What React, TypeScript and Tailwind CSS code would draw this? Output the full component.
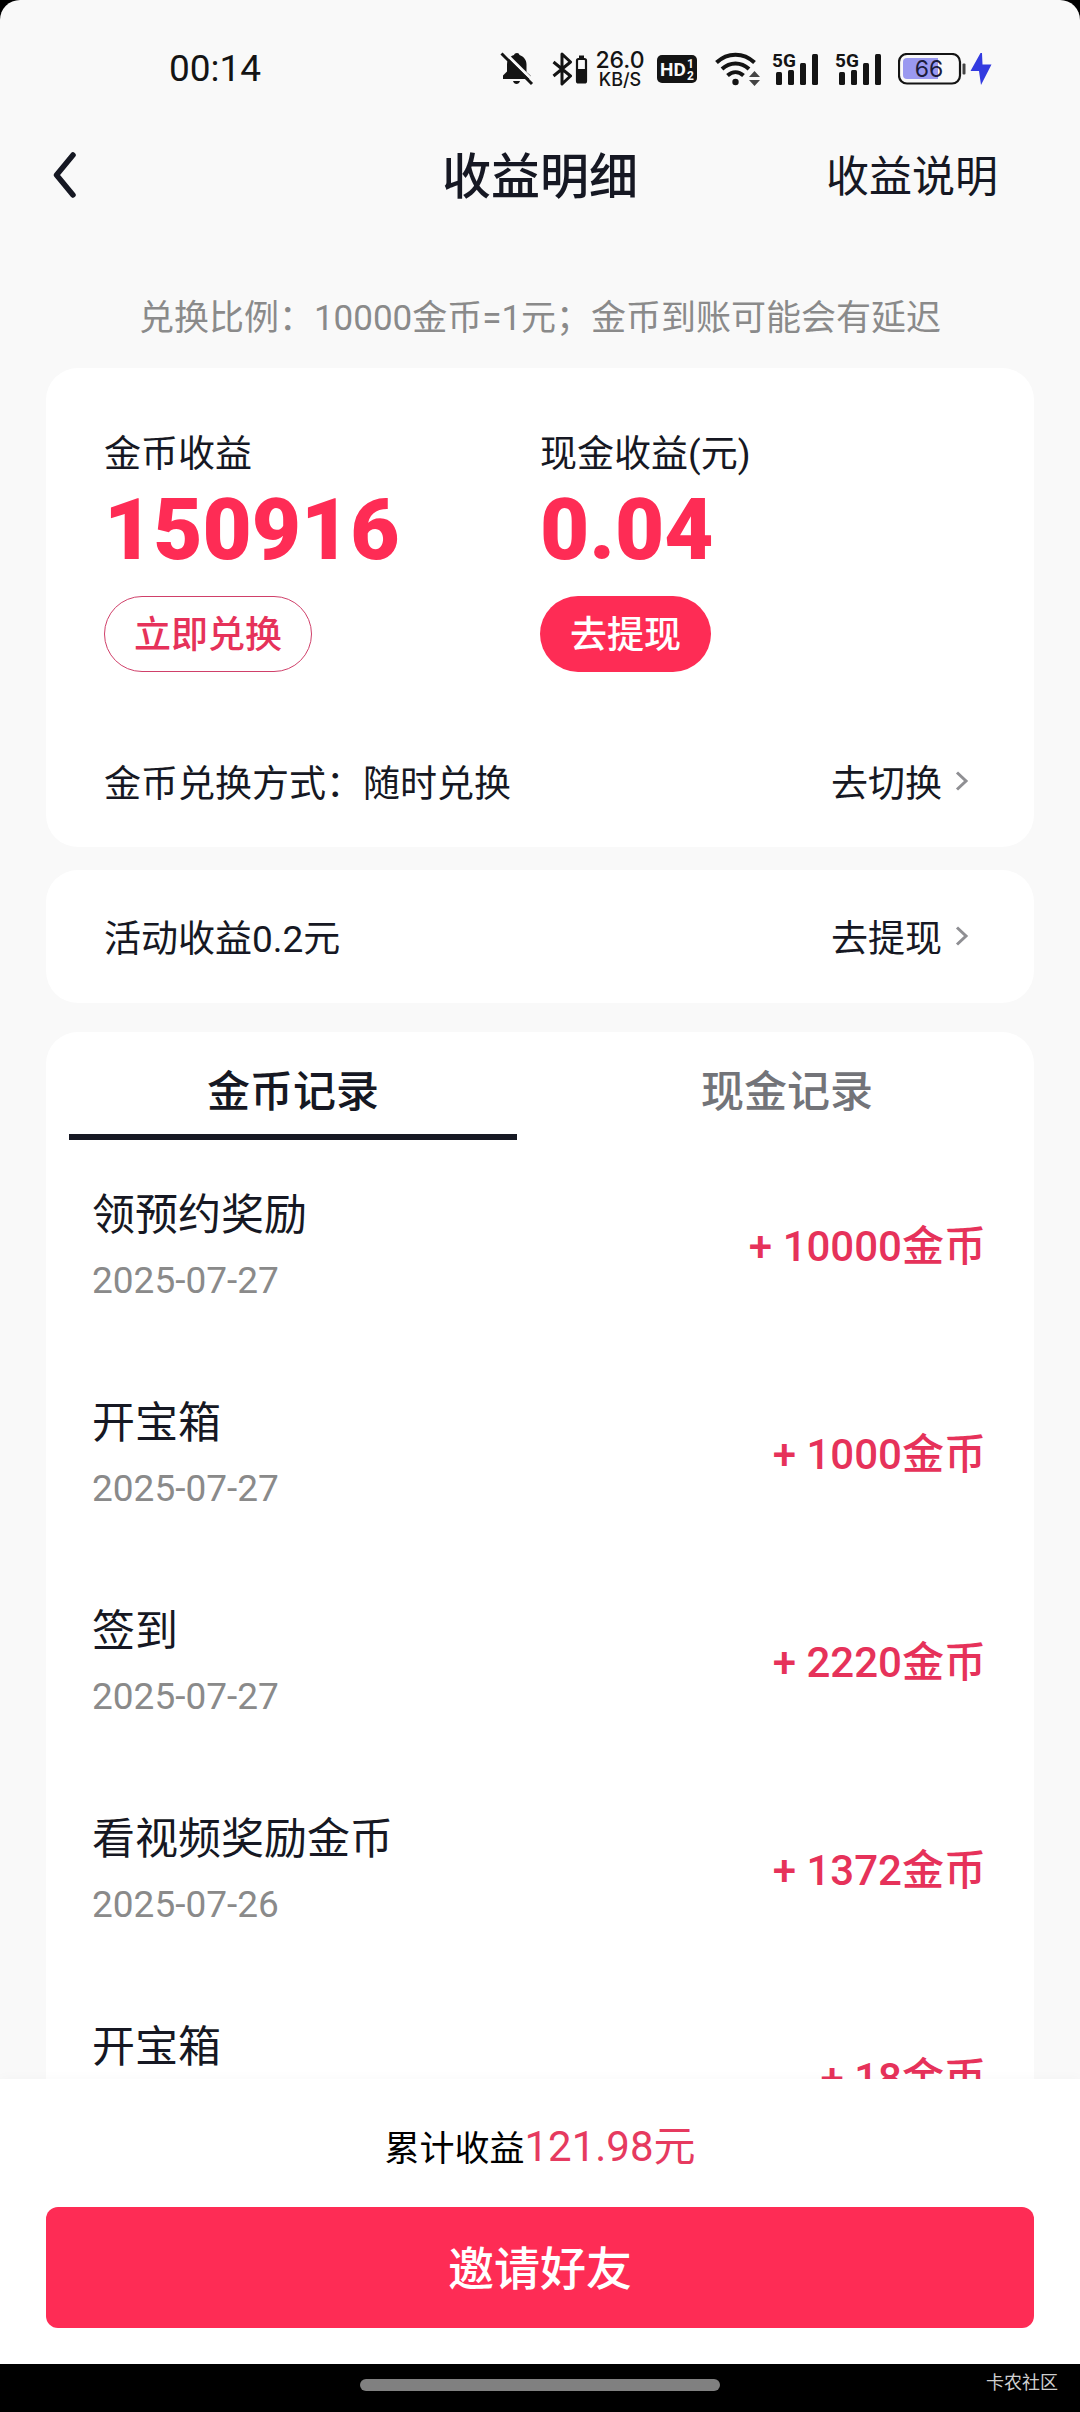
import * as React from "react";
import { clsx } from "clsx";

type TabKey = "coin" | "cash";

interface EarningRecord {
  id: number;
  title: string;
  date: string;
  amount: string;
}

const COIN_RECORDS: EarningRecord[] = [
  { id: 1, title: "领预约奖励", date: "2025-07-27", amount: "10000" },
  { id: 2, title: "开宝箱", date: "2025-07-27", amount: "1000" },
  { id: 3, title: "签到", date: "2025-07-27", amount: "2220" },
  { id: 4, title: "看视频奖励金币", date: "2025-07-26", amount: "1372" },
  { id: 5, title: "开宝箱", date: "2025-07-26", amount: "18" },
];

const TABS: { key: TabKey; label: string }[] = [
  { key: "coin", label: "金币记录" },
  { key: "cash", label: "现金记录" },
];

export default function App() {
  const [tab, setTab] = React.useState<TabKey>("coin");

  return (
    <div className="flex h-screen w-full flex-col bg-black font-[Roboto,'Noto_Sans_CJK_SC',sans-serif] text-[#161823]">
      <div className="flex min-h-0 flex-1 flex-col overflow-hidden rounded-t-[20px] bg-[#f9f9f9]">
        <StatusBar />
        <PageHeader />

        <main className="min-h-0 flex-1 overflow-hidden px-[46px]">
          <p className="pt-[33px] pb-[25px] text-center text-[35px] leading-[48px] text-[#8a8a8a]">
            兑换比例：10000金币=1元；金币到账可能会有延迟
          </p>

          <SummaryCard />

          <section className="mt-[23px] rounded-[32px] bg-white px-[58px] pt-11 pb-[37px]">
            <LinkRow text="活动收益0.2元" action="去提现" />
          </section>

          {/* ── Records ── */}
          <section className="mt-[29px] rounded-t-[32px] bg-white">
            <div role="tablist" className="grid grid-cols-2">
              {TABS.map((t) => (
                <button
                  key={t.key}
                  type="button"
                  role="tab"
                  aria-selected={tab === t.key}
                  onClick={() => setTab(t.key)}
                  className={clsx(
                    "mx-[23px] h-[108px] border-b-[6px] pt-[18px] text-[43px] font-medium",
                    tab === t.key
                      ? "border-[#161823] text-[#161823]"
                      : "border-transparent text-[#737479]"
                  )}
                >
                  {t.label}
                </button>
              ))}
            </div>
            <ul>
              {tab === "coin" &&
                COIN_RECORDS.map((r) => <RecordRow key={r.id} record={r} />)}
            </ul>
          </section>
        </main>

        <footer className="z-10 bg-white px-[46px] pt-10 pb-9 shadow-[0_0_12px_rgba(0,0,0,0.03)]">
          <p className="h-14 text-center text-[35px] leading-14 text-black">
            累计收益<span className="text-[42px] text-[#e63a5f]">121.98元</span>
          </p>
          <button
            type="button"
            className="mt-8 block h-[121px] w-full rounded-[12px] bg-[#fe2c55] pt-1 text-[46px] font-medium text-white"
          >
            邀请好友
          </button>
        </footer>
      </div>

      <NavigationBar />
    </div>
  );
}

/* ─────────── pieces ─────────── */

function PageHeader() {
  return (
    <header className="grid h-[172px] grid-cols-[1fr_auto_1fr] items-center">
      <button type="button" aria-label="返回" className="justify-self-start pl-[52px]">
        <svg width="24" height="48" viewBox="0 0 24 48" fill="none" aria-hidden="true">
          <path
            d="M21 3 4.500 23 21 43"
            stroke="#161823"
            strokeWidth="5.500"
            strokeLinecap="round"
            strokeLinejoin="round"
          />
        </svg>
      </button>
      <h1 className="pt-1 text-[49px] font-medium">收益明细</h1>
      <a href="#rules" className="justify-self-end pt-0.5 pr-[82px] text-[43px]">
        收益说明
      </a>
    </header>
  );
}

function SummaryCard() {
  return (
    <section className="rounded-[32px] bg-white px-[58px] pt-[61px] pb-9">
      <div className="grid grid-cols-2">
        <div>
          <p className="text-[37px] leading-[52px]">金币收益</p>
          <Figure value="150916" />
          <button
            type="button"
            className="mt-4 block h-[76px] rounded-full border border-[#d0406a] px-[29px] pt-1 text-[37px] font-medium text-[#e6325a]"
          >
            立即兑换
          </button>
        </div>
        <div>
          <p className="text-[37px] leading-[52px]">现金收益(元)</p>
          <Figure value="0.04" />
          <button
            type="button"
            className="mt-4 block h-[76px] rounded-full bg-[#fe2c55] px-[30px] pt-1 text-[37px] font-medium text-white"
          >
            去提现
          </button>
        </div>
      </div>
      <div className="mt-[87px]">
        <LinkRow text="金币兑换方式：随时兑换" action="去切换" />
      </div>
    </section>
  );
}

function Figure({ value }: { value: string }) {
  return (
    <p className="font-[Roboto,sans-serif] text-[85px] leading-[99px] font-black text-[#fe2c55]">
      {value}
    </p>
  );
}

function LinkRow({ text, action }: { text: string; action: string }) {
  return (
    <div className="flex items-center justify-between pr-1.5 text-[37px] leading-[52px]">
      <span>{text}</span>
      <a href="#action" className="flex items-center gap-3">
        {action}
        <svg className="mb-2" width="16" height="24" viewBox="0 0 16 24" fill="none" aria-hidden="true">
          <path d="M3 3.500 12 12 3 20.500" stroke="#8f8f93" strokeWidth="3" />
        </svg>
      </a>
    </div>
  );
}

function RecordRow({ record }: { record: EarningRecord }) {
  return (
    <li className="flex h-[208px] items-center justify-between pt-0.5 pr-[48px] pl-[46px]">
      <div className="pt-1">
        <p className="text-[43px] leading-[67px]">{record.title}</p>
        <p className="text-[37px] leading-[64px] text-[#8a8a8a]">{record.date}</p>
      </div>
      <p className="pt-0.5 text-[42px] font-medium text-[#e6325a]">+ {record.amount}金币</p>
    </li>
  );
}

function NavigationBar() {
  return (
    <div className="grid h-12 grid-cols-3 items-center pb-1.5">
      <div className="col-start-2 h-3 rounded-full bg-[#808080]" />
      <span className="mb-1 pr-[22px] text-right text-[18px] leading-5 text-[#cfcfcf]">
        卡农社区
      </span>
    </div>
  );
}

/* ─────────── status bar ─────────── */

function StatusBar() {
  return (
    <div className="flex h-[90px] items-center justify-between pt-12 pr-[88px] pl-[169px] text-[#141414]">
      <span className="text-[37px] leading-[42px]">00:14</span>
      <div className="flex h-[42px] items-center">
        <MutedBell />
        <Bluetooth />
        <div className="ml-1.5 flex w-[52px] flex-col items-center font-[Inter,sans-serif] font-medium">
          <span className="text-[23px] leading-[22px]">26.0</span>
          <span className="text-[18px] leading-[18px]">KB/S</span>
        </div>
        <HdBadge />
        <Wifi />
        <Signal />
        <Signal />
        <Battery />
        <svg className="ml-1" width="22" height="34" viewBox="0 0 22 34" aria-hidden="true">
          <path d="M10.500 1 .5 19h8.500L11 33 21.500 12.500H12.500L12 1Z" fill="#333be0" />
        </svg>
      </div>
    </div>
  );
}

function MutedBell() {
  return (
    <svg width="34" height="34" viewBox="0 0 34 34" aria-hidden="true">
      <path
        d="M17 1c1.500 0 2.200.8 2.500 2 4.500 1.500 7 5 7 9.500v7.500l4 3.500v3.500H3v-3.500l4-4v-7c0-4.500 2.500-8 7-9.500.3-1.200 1.500-2 3-2ZM13 29h7c-.5 2-2 3-3.500 3s-3-1-3.500-3Z"
        fill="currentColor"
      />
      <path d="M3.500-.5 34.500 30" stroke="#f9f9f9" strokeWidth="3" />
      <path d="M1.500 1.500 32 32" stroke="currentColor" strokeWidth="3" />
    </svg>
  );
}

function Bluetooth() {
  return (
    <svg className="ml-[18px]" width="36" height="34" viewBox="0 0 36 34" fill="none" aria-hidden="true">
      <path
        d="m1.500 10 17 14-8.500 8V2l8.500 8-17 14"
        stroke="currentColor"
        strokeWidth="3"
        strokeLinejoin="round"
      />
      <path d="M27 3.500h5v3h-5z" fill="currentColor" />
      <rect x="25" y="7" width="9" height="23.500" rx="1.500" stroke="currentColor" strokeWidth="2.200" />
      <path d="M25 17h9v13h-9z" fill="currentColor" />
    </svg>
  );
}

function HdBadge() {
  return (
    <svg className="ml-[11px]" width="40" height="28" viewBox="0 0 40 28" aria-label="HD 1 2">
      <rect width="40" height="28" rx="5" fill="currentColor" />
      <g fill="#f9f9f9" fontFamily="Roboto, sans-serif" fontWeight="700">
        <text x="3" y="21" fontSize="19">HD</text>
        <text x="30" y="13" fontSize="12">1</text>
        <text x="30" y="25" fontSize="12">2</text>
      </g>
    </svg>
  );
}

function Wifi() {
  return (
    <svg className="mr-3 ml-[18px]" width="45" height="34" viewBox="0 0 45 34" fill="none" aria-hidden="true">
      <g stroke="currentColor" strokeWidth="4">
        <path d="M1.500 10.500C12.500 0 28.500 0 39.500 10.500" />
        <path d="M7 17c8-7.500 19-7.500 27 0" />
        <path d="M12.500 23.500c5-4.500 11-4.500 16 0" />
      </g>
      <circle cx="20.500" cy="30" r="3.200" fill="currentColor" />
      <path d="m39.500 19 5.500 6H34ZM39.500 34l-5.500-6H45Z" fill="#444" />
    </svg>
  );
}

function Signal() {
  return (
    <svg
      className="mr-[15px] overflow-visible"
      width="48"
      height="34"
      viewBox="0 0 48 34"
      aria-label="5G"
    >
      <g fill="currentColor">
        <text x="0" y="15" fontSize="19" fontWeight="700" fontFamily="Roboto, sans-serif">
          5G
        </text>
        <rect x="4" y="20" width="6" height="13" rx="1.500" />
        <rect x="16" y="18" width="6" height="15" rx="1.500" />
        <rect x="28" y="11" width="6" height="22" rx="1.500" />
        <rect x="40" y="2" width="6" height="31" rx="1.500" />
      </g>
    </svg>
  );
}

function Battery() {
  return (
    <svg width="68" height="32" viewBox="0 0 68 32" aria-label="66%">
      <rect x="1" y="1" width="61" height="29.500" rx="8" fill="none" stroke="currentColor" strokeWidth="2.200" />
      <path d="M9 5h31v21H9a4 4 0 0 1-4-4V9a4 4 0 0 1 4-4Z" fill="#9a99f0" />
      <rect x="64.500" y="10.500" width="3" height="11" rx="1" fill="#444" />
      <text x="31" y="24" textAnchor="middle" fontSize="23" fontFamily="Inter, sans-serif" fill="#1c1c3c">
        66
      </text>
    </svg>
  );
}
